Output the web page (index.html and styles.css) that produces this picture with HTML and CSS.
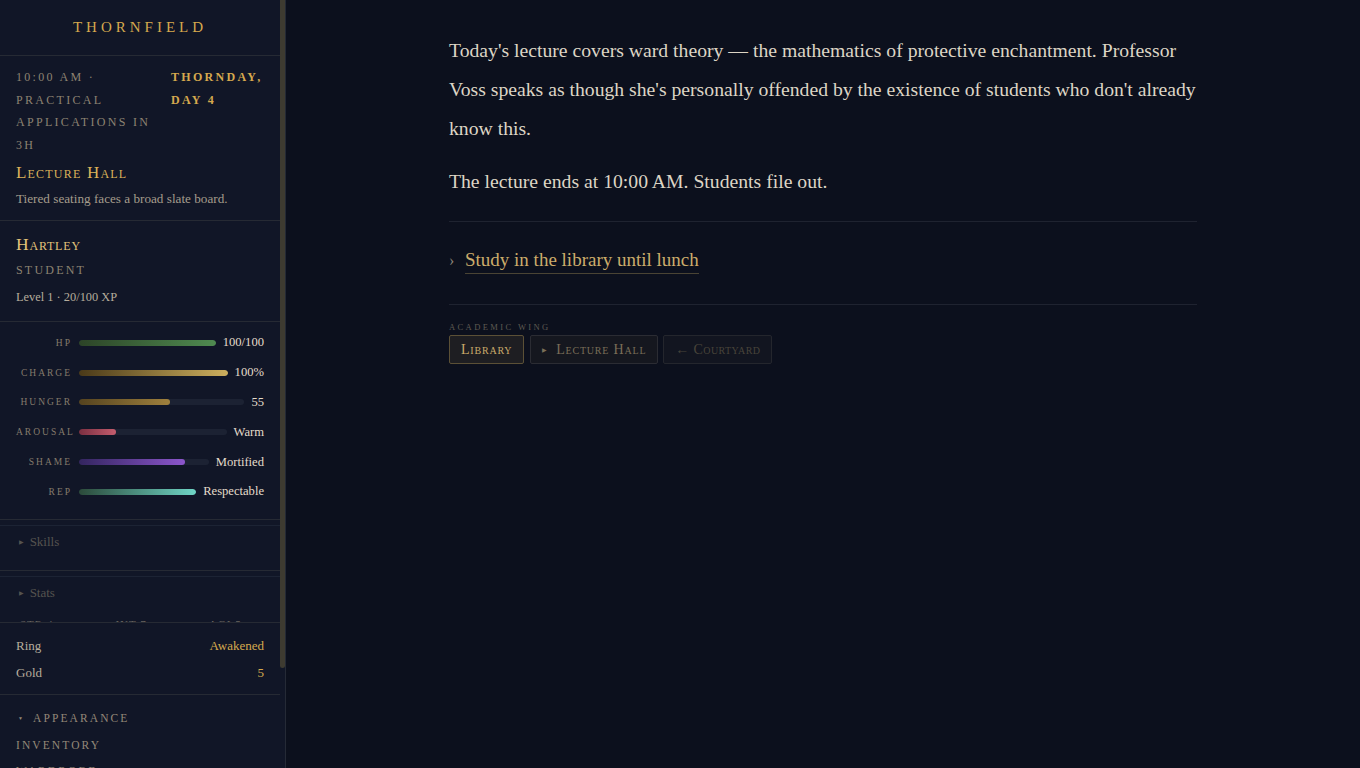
FILE: index.html
```html
<!DOCTYPE html>
<html lang="en">
<head>
    <meta charset="UTF-8">
    <meta name="viewport" content="width=device-width, initial-scale=1.0">
    <title>Thornfield</title>
    <link rel="stylesheet" href="styles.css">
</head>
<body>
    <aside class="sidebar">
        <div class="side-inner">
            <div class="brand">Thornfield</div>

            <div class="block when">
                <div class="clock">
                    <div class="time">10:00 AM · Practical Applications in 3h</div>
                    <div class="day">Thornday, Day 4</div>
                </div>
                <div class="place">Lecture Hall</div>
                <div class="place-desc">Tiered seating faces a broad slate board.</div>
            </div>

            <div class="block who">
                <div class="name">Hartley</div>
                <div class="role">Student</div>
                <div class="level">Level 1 · 20/100 XP</div>
            </div>

            <div class="block meters">
                <div class="meter">
                    <span class="meter-label">HP</span>
                    <span class="track"><span class="fill hp" style="width: 100%"></span></span>
                    <span class="meter-value">100/100</span>
                </div>
                <div class="meter">
                    <span class="meter-label">Charge</span>
                    <span class="track"><span class="fill charge" style="width: 100%"></span></span>
                    <span class="meter-value">100%</span>
                </div>
                <div class="meter">
                    <span class="meter-label">Hunger</span>
                    <span class="track"><span class="fill hunger" style="width: 55%"></span></span>
                    <span class="meter-value">55</span>
                </div>
                <div class="meter">
                    <span class="meter-label">Arousal</span>
                    <span class="track"><span class="fill arousal" style="width: 25%"></span></span>
                    <span class="meter-value">Warm</span>
                </div>
                <div class="meter">
                    <span class="meter-label">Shame</span>
                    <span class="track"><span class="fill shame" style="width: 82%"></span></span>
                    <span class="meter-value">Mortified</span>
                </div>
                <div class="meter">
                    <span class="meter-label">Rep</span>
                    <span class="track"><span class="fill rep" style="width: 100%"></span></span>
                    <span class="meter-value">Respectable</span>
                </div>
            </div>

            <div class="fold">
                <div class="fold-head"><span class="tri">&#9654;</span>Skills</div>
            </div>

            <div class="fold stats">
                <div class="fold-head"><span class="tri">&#9654;</span>Stats</div>
                <div class="stat-row">
                    <span>STR 4</span>
                    <span>INT 7</span>
                    <span>AGI 5</span>
                </div>
            </div>

            <div class="block purse">
                <div class="purse-row"><span>Ring</span><span class="gold">Awakened</span></div>
                <div class="purse-row"><span>Gold</span><span class="gold">5</span></div>
            </div>

            <div class="menu">
                <div class="menu-item"><span class="caret">&#9660;</span>Appearance</div>
                <div class="menu-item">Inventory</div>
                <div class="menu-item">Wardrobe</div>
                <div class="menu-item">Journal</div>
                <div class="menu-item">Settings</div>
            </div>
        </div>
        <div class="rail"><div class="thumb"></div></div>
    </aside>

    <main class="main">
        <div class="story">
            <p>Today's lecture covers ward theory — the mathematics of protective enchantment. Professor Voss speaks as though she's personally offended by the existence of students who don't already know this.</p>
            <p>The lecture ends at 10:00 AM. Students file out.</p>

            <div class="choices">
                <div class="choice">
                    <span class="chev">&#8250;</span>
                    <a href="#" class="choice-link">Study in the library until lunch</a>
                </div>
            </div>

            <div class="nav">
                <div class="nav-title">Academic Wing</div>
                <div class="nav-buttons">
                    <button class="nav-btn active">Library</button>
                    <button class="nav-btn"><span class="btn-tri">&#9654;</span>Lecture Hall</button>
                    <button class="nav-btn dim">&larr; Courtyard</button>
                </div>
            </div>
        </div>
    </main>
</body>
</html>
```

FILE: styles.css
```css
html, body {
    height: 100%;
}
body {
    margin: 0;
    display: flex;
    background: #0c101d;
    color: #ddd5c5;
    font-family: "Liberation Serif", "DejaVu Serif", serif;
    overflow: hidden;
}

/* sidebar */
.sidebar {
    display: flex;
    flex-shrink: 0;
    height: 100vh;
    background: #111627;
    border-right: 1px solid #252a36;
}
.side-inner {
    width: 280px;
    overflow: hidden;
}
.rail {
    width: 5px;
}
.thumb {
    height: 668px;
    background: #3e3b31;
    border-radius: 0 0 3px 3px;
}
.brand {
    height: 55px;
    line-height: 55px;
    text-align: center;
    text-transform: uppercase;
    letter-spacing: 4px;
    font-size: 15px;
    color: #d6a94e;
    border-bottom: 1px solid #262a34;
}
.block {
    padding: 0 16px;
    border-bottom: 1px solid #262a34;
}
.when {
    padding-top: 10px;
    padding-bottom: 11px;
}
.clock {
    display: grid;
    grid-template-columns: 150px 1fr;
    gap: 5px;
    text-transform: uppercase;
    font-size: 12px;
    line-height: 22.5px;
}
.time {
    color: #8d8372;
    letter-spacing: 2.3px;
}
.day {
    color: #d6a94e;
    font-weight: bold;
    letter-spacing: 2.3px;
}
.place {
    margin-top: 6px;
    font-variant: small-caps;
    font-size: 17px;
    letter-spacing: 1.2px;
    color: #dcb35a;
    line-height: 22px;
}
.place-desc {
    font-size: 13.2px;
    color: #a49c8c;
    line-height: 20px;
    margin-top: 5px;
}
.who {
    padding-top: 12px;
    padding-bottom: 14px;
}
.name {
    font-variant: small-caps;
    font-size: 17.5px;
    letter-spacing: 0.8px;
    color: #e3c47a;
    line-height: 22px;
}
.role {
    text-transform: uppercase;
    font-size: 12px;
    letter-spacing: 2.2px;
    color: #8d8372;
    line-height: 20px;
    margin-top: 5px;
}
.level {
    font-size: 12.4px;
    color: #b6ad9c;
    line-height: 20px;
    margin-top: 7px;
}
.meters {
    padding-top: 6px;
    padding-bottom: 12px;
}
.meter {
    display: flex;
    align-items: center;
    gap: 7px;
    height: 29.8px;
}
.meter-label {
    width: 56px;
    text-align: right;
    text-transform: uppercase;
    font-size: 9.5px;
    letter-spacing: 2px;
    color: #857b6c;
}
.track {
    flex: 1;
    height: 6px;
    border-radius: 3px;
    background: #1c2233;
    overflow: hidden;
}
.fill {
    display: block;
    height: 100%;
    border-radius: 3px;
}
.fill.hp { background: linear-gradient(90deg, #2c4427, #4f8a50); }
.fill.charge { background: linear-gradient(90deg, #4a3918, #cdaf5e); }
.fill.hunger { background: linear-gradient(90deg, #55431f, #9f803d); }
.fill.arousal { background: linear-gradient(90deg, #7b2f41, #c45d6e); }
.fill.shame { background: linear-gradient(90deg, #33255f, #8c56cc); }
.fill.rep { background: linear-gradient(90deg, #2b4a3a, #6fd5c6); }
.meter-value {
    font-size: 12.6px;
    color: #e4dccb;
    text-align: right;
}

.fold {
    margin-top: 5px;
    border-top: 1px solid #1c2334;
    border-bottom: 1px solid #262a34;
    height: 44px;
    padding: 0 16px;
}
.fold-head {
    font-size: 13px;
    color: #55534f;
    padding-left: 3px;
    line-height: 32px;
}
.tri {
    font-size: 6px;
    vertical-align: 2px;
    margin-right: 6px;
}
.stats {
    overflow: hidden;
    height: 45px;
    border-bottom: none;
}
.stat-row {
    display: flex;
    gap: 62px;
    font-size: 11px;
    color: #6a6560;
    padding: 9px 4px 0;
    letter-spacing: 1px;
}
.purse {
    border-top: 1px solid #262a34;
    padding-top: 9px;
    padding-bottom: 8px;
}
.purse-row {
    display: flex;
    justify-content: space-between;
    font-size: 13px;
    line-height: 27px;
    color: #b6ad9c;
}
.gold {
    color: #d4a94e;
}
.menu {
    padding: 10px 16px 20px;
}
.menu-item {
    text-transform: uppercase;
    font-size: 11.5px;
    letter-spacing: 2.1px;
    color: #948878;
    line-height: 26px;
}
.caret {
    font-size: 5px;
    margin: 0 8px 0 2px;
    vertical-align: 2px;
}

/* main */
.main {
    flex: 1;
    height: 100vh;
    overflow-y: auto;
}
.story {
    width: 748px;
    margin: 0 auto;
    padding-top: 31px;
}
.story p {
    margin: 0 0 14px;
    font-size: 19.7px;
    line-height: 39px;
    color: #ddd5c5;
}
.choices {
    margin-top: 20px;
    border-top: 1px solid #1f2330;
    border-bottom: 1px solid #1f2330;
    padding: 25px 0 30px;
}
.choice {
    display: flex;
    align-items: center;
    gap: 9px;
}
.chev {
    font-size: 16px;
    color: #8a8275;
    width: 7px;
}
.choice-link {
    font-size: 19px;
    color: #cbac6b;
    text-decoration: none;
    border-bottom: 1px solid #4a4434;
    line-height: 26px;
}
.nav {
    padding-top: 16px;
}
.nav-title {
    text-transform: uppercase;
    font-size: 8.5px;
    letter-spacing: 2.4px;
    color: #5e5a52;
    line-height: 12px;
}
.nav-buttons {
    display: flex;
    gap: 6px;
    margin-top: 2px;
}
.nav-btn {
    font-family: "Liberation Serif", serif;
    font-variant: small-caps;
    font-size: 14px;
    letter-spacing: 0.8px;
    height: 29px;
    padding: 0 11px;
    border-radius: 2px;
    background: #15171f;
    border: 1px solid #2b2c33;
    color: #7a6e58;
    cursor: pointer;
}
.nav-btn.active {
    background: #1e1e22;
    border-color: #5b5036;
    color: #cbac6b;
}
.nav-btn.dim {
    margin-left: -1px;
    letter-spacing: 0.4px;
    background: #121520;
    border-color: #24262d;
    color: #48443a;
}
.btn-tri {
    font-size: 6px;
    vertical-align: 2px;
    margin-right: 8px;
}
```
